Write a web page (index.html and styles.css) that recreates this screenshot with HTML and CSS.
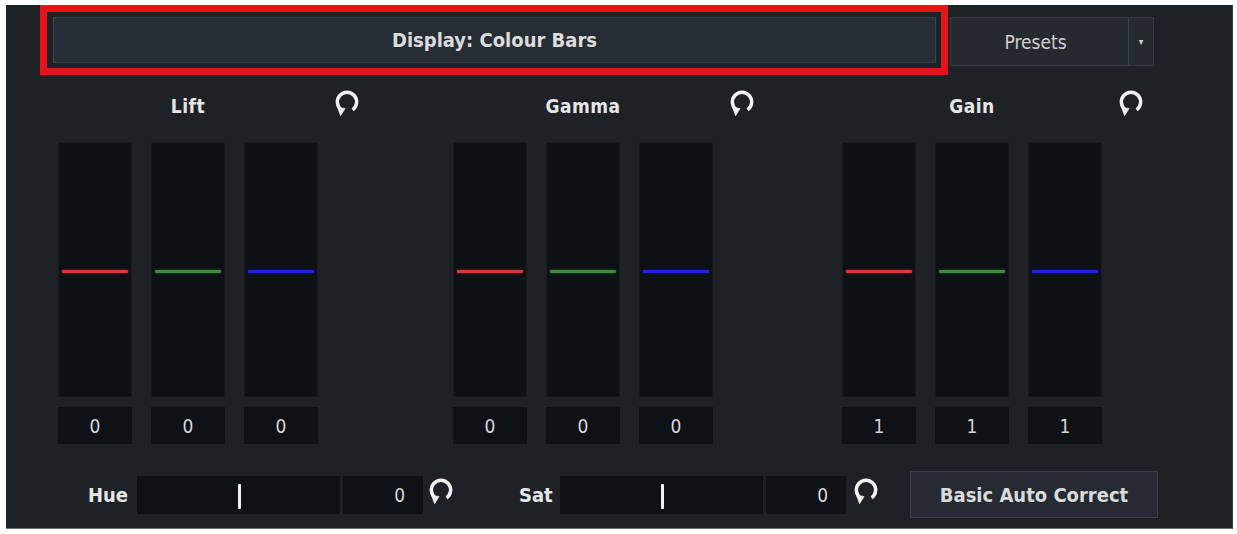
FILE: index.html
```html
<!DOCTYPE html>
<html lang="en">
<head>
  <meta charset="UTF-8" />
  <title>Colour Correction</title>
  <link rel="stylesheet" href="styles.css">
</head>
<body>

  <div class="panel">

    <div class="top-row">
      <div class="highlight">
        <button class="display-btn">Display: Colour Bars</button>
      </div>
      <div class="presets">
        <button class="presets-btn">Presets</button>
        <button class="presets-arrow">&#9662;</button>
      </div>
    </div>

    <div class="groups">

      <div class="group">
        <div class="group-head">
          <span class="group-title">Lift</span>
          <svg class="reset" viewBox="0 0 24 28"><path d="M17.2 19.4 A9 9 0 1 0 6.8 19.4" /><path class="tip" d="M3.2 17.2 L10.2 18.2 L6 25 Z" /></svg>
        </div>
        <div class="tracks">
          <div class="track"><span class="mark red"></span></div>
          <div class="track"><span class="mark green"></span></div>
          <div class="track"><span class="mark blue"></span></div>
        </div>
        <div class="values">
          <div class="value">0</div>
          <div class="value">0</div>
          <div class="value">0</div>
        </div>
      </div>

      <div class="group gamma">
        <div class="group-head">
          <span class="group-title">Gamma</span>
          <svg class="reset" viewBox="0 0 24 28"><path d="M17.2 19.4 A9 9 0 1 0 6.8 19.4" /><path class="tip" d="M3.2 17.2 L10.2 18.2 L6 25 Z" /></svg>
        </div>
        <div class="tracks">
          <div class="track"><span class="mark red"></span></div>
          <div class="track"><span class="mark green"></span></div>
          <div class="track"><span class="mark blue"></span></div>
        </div>
        <div class="values">
          <div class="value">0</div>
          <div class="value">0</div>
          <div class="value">0</div>
        </div>
      </div>

      <div class="group gain">
        <div class="group-head">
          <span class="group-title">Gain</span>
          <svg class="reset" viewBox="0 0 24 28"><path d="M17.2 19.4 A9 9 0 1 0 6.8 19.4" /><path class="tip" d="M3.2 17.2 L10.2 18.2 L6 25 Z" /></svg>
        </div>
        <div class="tracks">
          <div class="track"><span class="mark red"></span></div>
          <div class="track"><span class="mark green"></span></div>
          <div class="track"><span class="mark blue"></span></div>
        </div>
        <div class="values">
          <div class="value">1</div>
          <div class="value">1</div>
          <div class="value">1</div>
        </div>
      </div>

    </div>

    <div class="bottom-row">
      <span class="row-label hue-label">Hue</span>
      <div class="hslider"><span class="hmark"></span></div>
      <div class="hvalue">0</div>
      <svg class="reset hue-reset" viewBox="0 0 24 28"><path d="M17.2 19.4 A9 9 0 1 0 6.8 19.4" /><path class="tip" d="M3.2 17.2 L10.2 18.2 L6 25 Z" /></svg>

      <span class="row-label sat-label">Sat</span>
      <div class="hslider"><span class="hmark"></span></div>
      <div class="hvalue">0</div>
      <svg class="reset sat-reset" viewBox="0 0 24 28"><path d="M17.2 19.4 A9 9 0 1 0 6.8 19.4" /><path class="tip" d="M3.2 17.2 L10.2 18.2 L6 25 Z" /></svg>

      <button class="auto-btn">Basic Auto Correct</button>
    </div>

  </div>

</body>
</html>
```

FILE: styles.css
```css
body {
  margin: 0;
  background: #ffffff;
  font-family: "DejaVu Sans Condensed", "DejaVu Sans", sans-serif;
}

.panel {
  margin: 5px 4px 5px 6px;
  height: 524px;
  box-sizing: border-box;
  background: #1e2227;
  border-right: 1px solid #3a3f45;
  border-bottom: 1px solid #6b6f73;
  color: #e6e6e6;
}

button {
  font-family: inherit;
  color: #e2e2e2;
  cursor: pointer;
}

/* top row */
.top-row {
  display: flex;
  align-items: flex-start;
  height: 70px;
}

.highlight {
  margin-left: 34px;
  width: 908px;
  height: 70px;
  box-sizing: border-box;
  border: 7px solid #e3151b;
  padding: 5px 5px 5px 6px;
}

.display-btn {
  width: 100%;
  height: 46px;
  background: #272d35;
  border: 1px solid #3b424b;
  font-size: 20px;
  font-weight: bold;
  color: #dcdcdc;
}

.presets {
  display: flex;
  margin-top: 12px;
  margin-left: 2px;
  height: 47px;
  border: 1px solid #353b43;
  background: #252a31;
}

.presets-btn {
  width: 178px;
  background: transparent;
  border: none;
  border-right: 1px solid #3a4048;
  font-size: 19px;
  color: #d0d0d0;
  padding: 0 8px 0 0;
}

.presets-arrow {
  width: 24px;
  background: transparent;
  border: none;
  font-size: 10px;
  color: #d0d0d0;
  padding: 0;
}

/* lift / gamma / gain */
.groups {
  display: flex;
  padding-left: 52px;
}

.group {
  width: 302px;
}

.group.gamma {
  margin-left: 93px;
}

.group.gain {
  margin-left: 87px;
}

.group-head {
  display: flex;
  align-items: center;
  height: 67px;
}

.group-title {
  width: 260px;
  flex-shrink: 0;
  text-align: center;
  font-size: 19px;
  font-weight: bold;
  letter-spacing: 0.5px;
  margin-top: -6px;
}

.reset {
  flex-shrink: 0;
  width: 26px;
  height: 30px;
  fill: none;
  stroke: #f2f2f2;
  stroke-width: 3.2;
}

.reset .tip {
  fill: #f2f2f2;
  stroke-width: 0.6;
}

.group-head .reset {
  margin-left: 16px;
  margin-top: -10px;
}

.tracks,
.values {
  display: flex;
  gap: 19px;
}

.track {
  width: 74px;
  height: 255px;
  background: #0d1015;
  border: 1px solid #171b20;
  box-sizing: border-box;
  display: flex;
  align-items: center;
  padding: 0 3px;
}

.mark {
  flex: 1;
  height: 3px;
  margin-top: 3px;
  border-radius: 1px;
}

.mark.red { background: #d8373b; box-shadow: 0 0 3px #a01a1e; }
.mark.green { background: #3c8f3c; box-shadow: 0 0 3px #1f5a1f; }
.mark.blue { background: #2525e0; box-shadow: 0 0 3px #1515a0; }

.values {
  margin-top: 10px;
}

.value {
  width: 74px;
  height: 37px;
  background: #0e1116;
  display: flex;
  align-items: center;
  justify-content: center;
  font-size: 19px;
  color: #d6d6d6;
}

/* hue / sat row */
.bottom-row {
  display: flex;
  align-items: center;
  margin-top: 27px;
  padding-left: 82px;
  height: 47px;
}

.row-label {
  flex-shrink: 0;
  font-size: 20px;
  font-weight: bold;
  width: 49px;
}

.sat-label {
  margin-left: 65px;
  width: 41px;
}

.hslider {
  flex-shrink: 0;
  width: 203px;
  height: 38px;
  background: #0e1116;
  position: relative;
}

.hmark {
  position: absolute;
  left: 101px;
  top: 8px;
  width: 3px;
  height: 25px;
  background: #f0f0f0;
  border-radius: 1px;
}

.hvalue {
  flex-shrink: 0;
  width: 80px;
  height: 38px;
  margin-left: 3px;
  background: #0e1116;
  display: flex;
  align-items: center;
  justify-content: flex-end;
  padding-right: 18px;
  box-sizing: border-box;
  font-size: 19px;
  color: #d6d6d6;
}

.bottom-row .reset {
  margin-top: -6px;
}

.hue-reset {
  margin-left: 5px;
}

.sat-reset {
  margin-left: 7px;
}

.auto-btn {
  flex-shrink: 0;
  margin-left: 31px;
  width: 248px;
  height: 47px;
  background: #262b33;
  border: 1px solid #3a4048;
  font-size: 20px;
  font-weight: bold;
  color: #dadada;
}
```
